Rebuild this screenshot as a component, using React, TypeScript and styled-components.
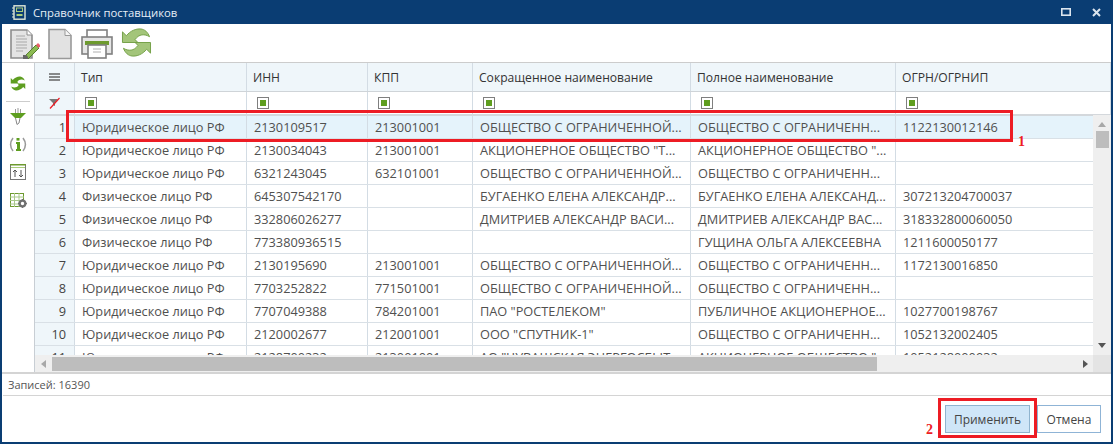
import React from 'react';
import styled, { createGlobalStyle } from 'styled-components';

const GlobalStyle = createGlobalStyle`
  html, body {
    margin: 0;
    padding: 0;
    background: #fff;
  }
  body {
    font-family: "Open Sans", "Noto Sans", sans-serif;
    font-size: 12px;
    color: #444;
  }
`;

const columns = '40px 172px 121px 105px 218px 205px 1fr';

const Window = styled.div`
  position: relative;
  box-sizing: border-box;
  width: 1113px;
  height: 444px;
  border: 2px solid #0a3d73;
  border-top: 0;
  display: flex;
  flex-direction: column;
  overflow: hidden;
`;

const TitleBar = styled.div`
  height: 24px;
  flex: none;
  margin: 0 -2px;
  padding: 0 12px 0 12px;
  background: #0a3d73;
  color: #e6eef6;
  display: flex;
  align-items: center;
  gap: 7px;
  font-size: 11.3px;
`;

const TitleText = styled.span`
  flex: 1;
`;

const WinButtons = styled.div`
  display: flex;
  align-items: center;
  gap: 21px;
`;

const Toolbar = styled.div`
  height: 39px;
  flex: none;
  padding: 4px 0 0 6px;
  box-sizing: border-box;
  display: flex;
  align-items: flex-start;
  gap: 7px;
  border-bottom: 1px solid #ccc;
`;

const Body = styled.div`
  height: 311px;
  flex: none;
  box-sizing: border-box;
  display: flex;
  border-bottom: 2px solid #d4d4d4;
`;

const SideBar = styled.div`
  width: 33px;
  flex: none;
  border-right: 1px solid #c8ced4;
  display: flex;
  flex-direction: column;
  align-items: center;
  padding-top: 6px;
  box-sizing: border-box;
`;

const SideItem = styled.div`
  height: 28px;
  display: flex;
  align-items: center;
  justify-content: center;
`;

const SideDivider = styled.div`
  width: 24px;
  height: 1px;
  background: #ccc;
  margin-top: 4px;
`;

const GridArea = styled.div`
  position: relative;
  flex: 1;
  min-width: 0;
  overflow: hidden;
`;

const HeaderRow = styled.div`
  display: grid;
  grid-template-columns: ${columns};
  height: 29px;
  background: #eff6fa;
  border-bottom: 1px solid #cfd4d8;
  box-sizing: border-box;
`;

const HeaderCell = styled.div`
  display: flex;
  align-items: center;
  padding-left: 6px;
  border-right: 1px solid #d3dce4;
  color: #333;
  font-size: 12.1px;
  white-space: nowrap;
`;

const CornerCell = styled(HeaderCell)`
  justify-content: center;
  padding: 0;
`;

const FilterRow = styled.div`
  display: grid;
  grid-template-columns: ${columns};
  height: 24px;
  border-bottom: 2px solid #d4d8dc;
  box-sizing: border-box;
`;

const FilterCell = styled.div`
  display: flex;
  align-items: center;
  padding-left: 10px;
  border-right: 1px solid #d3dce4;
`;

const FilterIconCell = styled(FilterCell)`
  background: #eff6fa;
  justify-content: center;
  padding: 0;
`;

const FilterBox = styled.span`
  width: 12px;
  height: 12px;
  box-sizing: border-box;
  border: 1px solid #7f7f7f;
  background: #fff;
  padding: 2px;
  display: block;

  &::after {
    content: '';
    display: block;
    width: 6px;
    height: 6px;
    background: #5f9e1f;
  }
`;

const DataRow = styled.div<{ $selected?: boolean }>`
  display: grid;
  grid-template-columns: ${columns};
  height: 23px;
  border-bottom: 1px solid #d9e0e6;
  box-sizing: border-box;
  background: ${(p) => (p.$selected ? '#e5f3fb' : '#fff')};
`;

const Cell = styled.div`
  display: flex;
  align-items: center;
  padding-left: 7px;
  border-right: 1px solid #d3dce4;
  color: #50504f;
  font-size: 12.75px;
  white-space: nowrap;
  overflow: hidden;
`;

const NumCell = styled(Cell)`
  justify-content: flex-end;
  padding: 0 8px 0 0;
  background: #eff6fa;
  color: #444;
`;

const VScroll = styled.div`
  position: absolute;
  right: 0;
  top: 52px;
  bottom: 0;
  width: 18px;
  background: #efefef;
  display: flex;
  flex-direction: column;
  align-items: center;
`;

const VThumb = styled.div`
  width: 13px;
  height: 17px;
  margin-top: 4px;
  background: #bdbdbd;
`;

const ArrowUp = styled.span`
  margin-top: 7px;
  border: 4px solid transparent;
  border-top: 0;
  border-bottom: 5px solid #a8a8a8;
`;

const ArrowDown = styled.span`
  margin-top: auto;
  margin-bottom: 24px;
  border: 4px solid transparent;
  border-bottom: 0;
  border-top: 5px solid #555;
`;

const HScroll = styled.div`
  position: absolute;
  left: 0;
  right: 0;
  bottom: 0;
  height: 17px;
  background: #efefef;
  display: flex;
  align-items: center;
`;

const HThumb = styled.div`
  width: 825px;
  height: 14px;
  margin-left: 17px;
  background: #bdbdbd;
`;

const ScrollCorner = styled.div`
  position: absolute;
  right: 0;
  top: 0;
  bottom: 0;
  width: 18px;
  background: #e4e4e4;
`;

const ArrowLeft = styled.span`
  position: absolute;
  left: 6px;
  border: 4px solid transparent;
  border-left: 0;
  border-right: 5px solid #a8a8a8;
`;

const ArrowRight = styled.span`
  position: absolute;
  right: 23px;
  border: 4px solid transparent;
  border-right: 0;
  border-left: 5px solid #555;
`;

const StatusBar = styled.div`
  height: 21px;
  flex: none;
  padding-left: 6px;
  display: flex;
  align-items: center;
  font-size: 11px;
  color: #555;
`;

const FooterLine = styled.div`
  height: 1px;
  flex: none;
  margin-left: 1px;
  background: #d4d4d4;
`;

const Footer = styled.div`
  flex: 1;
  display: flex;
  justify-content: flex-end;
  align-items: flex-start;
  gap: 7px;
  padding: 9px 10px 0 0;
`;

const Button = styled.button<{ $primary?: boolean }>`
  height: 28px;
  padding: 0;
  width: ${(p) => (p.$primary ? '85px' : '64px')};
  border: 1px solid ${(p) => (p.$primary ? '#8fb4cf' : '#8fb4d6')};
  background: ${(p) => (p.$primary ? '#cfe6f8' : '#fff')};
  color: #444;
  font-family: inherit;
  font-size: 12px;
`;

const HighlightBox = styled.div`
  position: absolute;
  box-sizing: border-box;
  border: 3px solid #ed1c24;
  pointer-events: none;
`;

const RowHighlight = styled(HighlightBox)`
  left: 64px;
  top: 110px;
  width: 947px;
  height: 32px;
`;

const ButtonHighlight = styled(HighlightBox)`
  left: 936px;
  top: 398px;
  width: 99px;
  height: 40px;
`;

const Mark = styled.span`
  position: absolute;
  color: #ed1c24;
  font-family: "Liberation Serif", serif;
  font-weight: bold;
  font-size: 14px;
  line-height: 14px;
`;

const MarkOne = styled(Mark)`
  left: 1016px;
  top: 135px;
`;

const MarkTwo = styled(Mark)`
  left: 924px;
  top: 423px;
`;

const headers = ['Тип', 'ИНН', 'КПП', 'Сокращенное наименование', 'Полное наименование', 'ОГРН/ОГРНИП'];

const rows = [
  ['Юридическое лицо РФ', '2130109517', '213001001', 'ОБЩЕСТВО С ОГРАНИЧЕННОЙ...', 'ОБЩЕСТВО С ОГРАНИЧЕНН...', '1122130012146'],
  ['Юридическое лицо РФ', '2130034043', '213001001', 'АКЦИОНЕРНОЕ ОБЩЕСТВО "Т...', 'АКЦИОНЕРНОЕ ОБЩЕСТВО "...', ''],
  ['Юридическое лицо РФ', '6321243045', '632101001', 'ОБЩЕСТВО С ОГРАНИЧЕННОЙ...', 'ОБЩЕСТВО С ОГРАНИЧЕНН...', ''],
  ['Физическое лицо РФ', '645307542170', '', 'БУГАЕНКО ЕЛЕНА АЛЕКСАНДР...', 'БУГАЕНКО ЕЛЕНА АЛЕКСАНД...', '307213204700037'],
  ['Физическое лицо РФ', '332806026277', '', 'ДМИТРИЕВ АЛЕКСАНДР ВАСИ...', 'ДМИТРИЕВ АЛЕКСАНДР ВАС...', '318332800060050'],
  ['Физическое лицо РФ', '773380936515', '', '', 'ГУЩИНА ОЛЬГА АЛЕКСЕЕВНА', '1211600050177'],
  ['Юридическое лицо РФ', '2130195690', '213001001', 'ОБЩЕСТВО С ОГРАНИЧЕННОЙ...', 'ОБЩЕСТВО С ОГРАНИЧЕНН...', '1172130016850'],
  ['Юридическое лицо РФ', '7703252822', '771501001', 'ОБЩЕСТВО С ОГРАНИЧЕННОЙ...', 'ОБЩЕСТВО С ОГРАНИЧЕНН...', ''],
  ['Юридическое лицо РФ', '7707049388', '784201001', 'ПАО "РОСТЕЛЕКОМ"', 'ПУБЛИЧНОЕ АКЦИОНЕРНОЕ...', '1027700198767'],
  ['Юридическое лицо РФ', '2120002677', '212001001', 'ООО "СПУТНИК-1"', 'ОБЩЕСТВО С ОГРАНИЧЕНН...', '1052132002405'],
  ['Юридическое лицо РФ', '2128700232', '213001001', 'АО "ЧУВАШСКАЯ ЭНЕРГОСБЫТ...', 'АКЦИОНЕРНОЕ ОБЩЕСТВО "...', '1052128000932'],
];

const ARROW = 'M1 4l4 4C9 3 15 0.5 20 1c4 .5 7 3 9 8-5-3-11-3-15 3l3 3H1z';

const NotebookIcon = () => (
  <svg width="14" height="15" viewBox="0 0 14 15">
    <rect x="2" y="0.8" width="11" height="13.4" fill="#0a3d73" stroke="#dfe7d8" strokeWidth="1.4" />
    <rect x="4.5" y="3" width="6" height="3.5" fill="none" stroke="#a9cc7a" />
    <rect x="4.5" y="9" width="6" height="2" fill="#a9cc7a" />
    <path d="M0 3h2M0 6h2M0 9h2M0 12h2" stroke="#dfe7d8" />
  </svg>
);

const EditDocIcon = () => (
  <svg width="32" height="32" viewBox="0 0 32 32">
    <path d="M3 2h16l5 5v23H3z" fill="#e4e4e4" stroke="#8c8c8c" strokeWidth="1.6" />
    <path d="M19 2v5h5" fill="#fff" stroke="#8c8c8c" />
    <path d="M8 8h9M8 11h11M8 14h11M8 17h11M8 20h11M8 23h7" stroke="#a8a8a8" />
    <path d="M18 27L28 17l3 3-11 11z" fill="#8cbb52" stroke="#567f2d" />
    <path d="M15 31v-4l3 0 2 2v2z" fill="#666" />
    <path d="M28 17l2-2 2.5 2.5-2 2.5z" fill="#e8606a" />
  </svg>
);

const BlankDocIcon = () => (
  <svg width="26" height="32" viewBox="0 0 26 32">
    <path d="M2 1.5h16l6 6v23H2z" fill="#e2e2e2" stroke="#999" strokeWidth="1.6" />
    <path d="M18 1.5v6h6" fill="#f6f6f6" stroke="#999" />
  </svg>
);

const PrintIcon = () => (
  <svg width="34" height="32" viewBox="0 0 34 32">
    <rect x="7" y="2" width="20" height="10" fill="#fff" stroke="#808080" strokeWidth="1.6" />
    <rect x="2" y="9" width="30" height="17" fill="#e6e6e6" stroke="#808080" strokeWidth="1.6" />
    <rect x="5" y="13" width="24" height="4" fill="#6d9a2e" />
    <rect x="8" y="17" width="18" height="13" fill="#fff" stroke="#808080" strokeWidth="1.6" />
    <path d="M13 21h8M13 24h8" stroke="#b0b0b0" />
  </svg>
);

const RefreshBig = () => (
  <svg width="31" height="29" viewBox="0 0 31 30">
    <path d={ARROW} fill="#a3c57a" stroke="#73a046" />
    <path d={ARROW} fill="#a3c57a" stroke="#73a046" transform="rotate(180 15.5 15)" />
  </svg>
);

const RefreshSmall = () => (
  <svg width="16" height="15" viewBox="0 0 31 30">
    <path d={ARROW} fill="#5e9e20" />
    <path d={ARROW} fill="#5e9e20" transform="rotate(180 15.5 15)" />
  </svg>
);

const FunnelIcon = () => (
  <svg width="16" height="17" viewBox="0 0 16 17">
    <path d="M5.5 1v4M8 0v5M10.5 1v4" stroke="#999" />
    <path d="M0 5h16l-5 5H5z" fill="#5e9e20" />
    <path d="M5.5 10l1.5 6.5L9 15l1-5" fill="#fff" stroke="#888" />
  </svg>
);

const InfoIcon = () => (
  <svg width="18" height="15" viewBox="0 0 18 15">
    <path d="M4 1C1 5 1 10 4 14M14 1c3 4 3 9 0 13" fill="none" stroke="#9a9a9a" strokeWidth="1.5" />
    <rect x="7.5" y="1" width="3" height="2.6" fill="#5e9e20" />
    <path d="M7 5h4v7h1v2H7v-2h1V7H7z" fill="#5e9e20" />
  </svg>
);

const SortTableIcon = () => (
  <svg width="16" height="16" viewBox="0 0 16 16">
    <rect x="0.5" y="0.5" width="15" height="15" fill="#fff" stroke="#777" />
    <rect x="0" y="0" width="16" height="1.5" fill="#6d9a2e" />
    <rect x="1" y="3" width="14" height="1" fill="#a9cc7a" />
    <path d="M5 13V6M3 8l2-2 2 2M11 6v7M9 11l2 2 2-2" fill="none" stroke="#555" />
  </svg>
);

const TableGearIcon = () => (
  <svg width="17" height="15" viewBox="0 0 17 15">
    <rect x="0.5" y="0.5" width="13" height="13" fill="#fff" stroke="#6d9a2e" />
    <path d="M0 4h14M0 7.5h14M0 11h14M4.5 0v14M9 0v14" stroke="#a9c88a" />
    <circle cx="12.5" cy="10.5" r="2.8" fill="#fff" stroke="#6f6f6f" strokeWidth="2.2" />
    <path d="M12.5 6v1.5M12.5 13.5V15M8 10.5h1.5M15.5 10.5H17" stroke="#6f6f6f" strokeWidth="1.4" />
  </svg>
);

const MenuIcon = () => (
  <svg width="11" height="8" viewBox="0 0 11 8">
    <path d="M0 1h11M0 4h11M0 7h11" stroke="#666" strokeWidth="1.4" />
  </svg>
);

const ClearFilterIcon = () => (
  <svg width="12" height="12" viewBox="0 0 12 12">
    <path d="M0 2h9L6 6v3L4 8V6z" fill="#777" />
    <path d="M1 11.5L10.5 1" stroke="#ed1c24" strokeWidth="1.2" />
  </svg>
);

const MaximizeIcon = () => (
  <svg width="10" height="8" viewBox="0 0 10 8">
    <rect x="0.8" y="0.8" width="8.4" height="6.4" fill="none" stroke="#dbe5ee" strokeWidth="1.6" />
  </svg>
);

const CloseIcon = () => (
  <svg width="9" height="9" viewBox="0 0 9 9">
    <path d="M1 1l7 7M8 1l-7 7" stroke="#dbe5ee" strokeWidth="2" />
  </svg>
);

const App: React.FC = () => (
  <>
    <GlobalStyle />
    <Window>
      <TitleBar>
        <NotebookIcon />
        <TitleText>Справочник поставщиков</TitleText>
        <WinButtons>
          <MaximizeIcon />
          <CloseIcon />
        </WinButtons>
      </TitleBar>
      <Toolbar>
        <EditDocIcon />
        <BlankDocIcon />
        <PrintIcon />
        <RefreshBig />
      </Toolbar>
      <Body>
        <SideBar>
          <SideItem>
            <RefreshSmall />
          </SideItem>
          <SideDivider />
          <SideItem>
            <FunnelIcon />
          </SideItem>
          <SideItem>
            <InfoIcon />
          </SideItem>
          <SideItem>
            <SortTableIcon />
          </SideItem>
          <SideItem>
            <TableGearIcon />
          </SideItem>
        </SideBar>
        <GridArea>
          <HeaderRow>
            <CornerCell>
              <MenuIcon />
            </CornerCell>
            {headers.map((h) => (
              <HeaderCell key={h}>{h}</HeaderCell>
            ))}
          </HeaderRow>
          <FilterRow>
            <FilterIconCell>
              <ClearFilterIcon />
            </FilterIconCell>
            {headers.map((h) => (
              <FilterCell key={h}>
                <FilterBox />
              </FilterCell>
            ))}
          </FilterRow>
          {rows.map((r, i) => (
            <DataRow key={i} $selected={i === 0}>
              <NumCell>{i + 1}</NumCell>
              {r.map((c, j) => (
                <Cell key={j}>{c}</Cell>
              ))}
            </DataRow>
          ))}
          <VScroll>
            <ArrowUp />
            <VThumb />
            <ArrowDown />
          </VScroll>
          <HScroll>
            <ArrowLeft />
            <HThumb />
            <ArrowRight />
            <ScrollCorner />
          </HScroll>
        </GridArea>
      </Body>
      <StatusBar>Записей: 16390</StatusBar>
      <FooterLine />
      <Footer>
        <Button $primary>Применить</Button>
        <Button>Отмена</Button>
      </Footer>
      <RowHighlight />
      <MarkOne>1</MarkOne>
      <ButtonHighlight />
      <MarkTwo>2</MarkTwo>
    </Window>
  </>
);

export default App;
